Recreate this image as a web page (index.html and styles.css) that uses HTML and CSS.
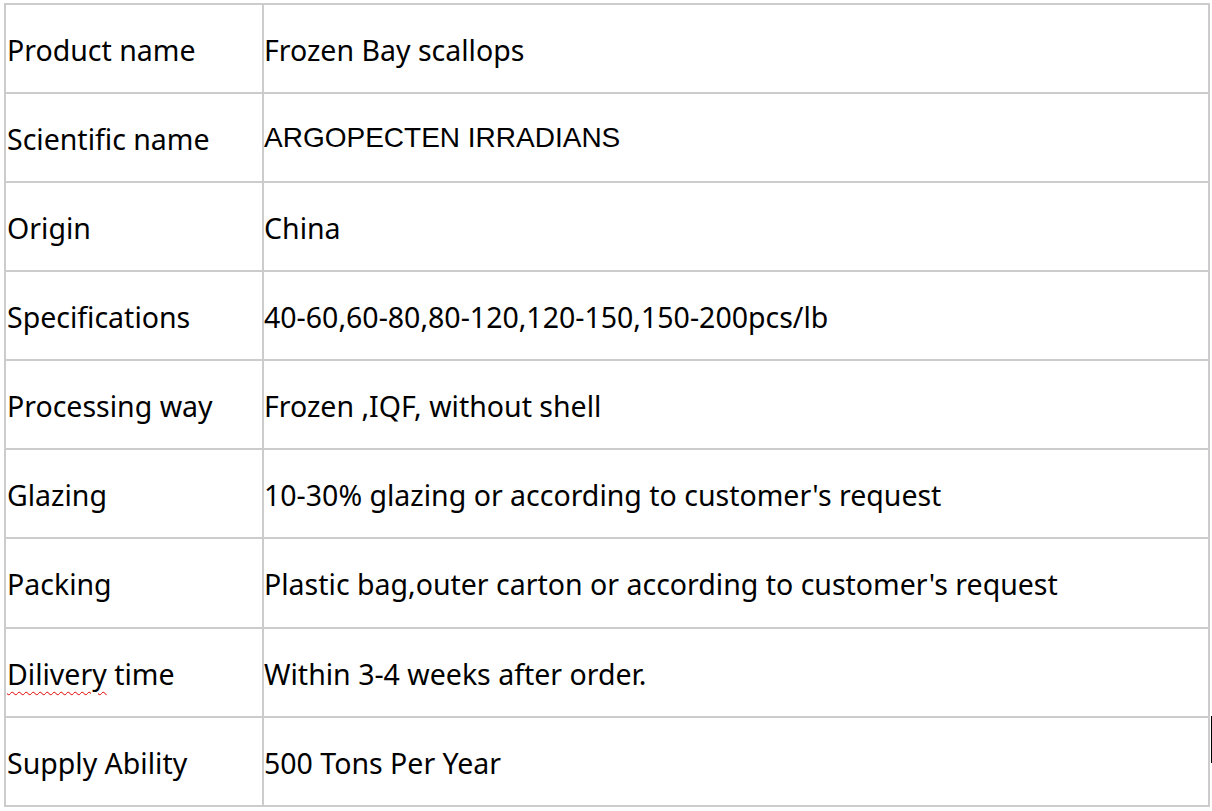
FILE: index.html
```html
<!DOCTYPE html>
<html>
<head>
<meta charset="utf-8">
<link rel="stylesheet" href="styles.css">
</head>
<body>
<div class="spec">
  <div class="cell key">Product name</div>
  <div class="cell val">Frozen Bay scallops</div>
  <div class="cell key">Scientific name</div>
  <div class="cell val latin">ARGOPECTEN IRRADIANS</div>
  <div class="cell key">Origin</div>
  <div class="cell val">China</div>
  <div class="cell key">Specifications</div>
  <div class="cell val">40-60,60-80,80-120,120-150,150-200pcs/lb</div>
  <div class="cell key">Processing way</div>
  <div class="cell val">Frozen ,IQF, without shell</div>
  <div class="cell key">Glazing</div>
  <div class="cell val">10-30% glazing or according to customer's request</div>
  <div class="cell key">Packing</div>
  <div class="cell val">Plastic bag,outer carton or according to customer's request</div>
  <div class="cell key"><span><span class="misspelled">Dilivery</span> time</span></div>
  <div class="cell val">Within 3-4 weeks after order.</div>
  <div class="cell key">Supply Ability</div>
  <div class="cell val">500 Tons Per Year</div>
</div>
<div class="caret"></div>
</body>
</html>
```
FILE: styles.css
```css
html, body {
  margin: 0;
  padding: 0;
  background: #ffffff;
}
body {
  position: relative;
  width: 1212px;
  height: 811px;
  overflow: hidden;
  font-family: "Noto Sans", "Open Sans", sans-serif;
  color: #000000;
}
.spec {
  margin: 3px 0 0 4px;
  width: 1206px;
  box-sizing: border-box;
  padding: 2px;
  background: #cccccc;
  display: grid;
  grid-template-columns: 256px 944px;
  grid-template-rows: 87px 87px 87px 87px 87px 87px 88px 87px 87px;
  gap: 2px;
}
.cell {
  background: #ffffff;
  display: flex;
  align-items: center;
  box-sizing: border-box;
  padding-top: 3px;
  font-size: 28.5px;
  line-height: 1;
  white-space: nowrap;
}
.key {
  padding-left: 1px;
}
.val {
  padding-left: 0;
}
.latin {
  font-family: "Liberation Sans", Arial, sans-serif;
  font-size: 28px;
  padding-top: 0;
}
.misspelled {
  text-decoration: underline wavy #e00000;
  text-decoration-thickness: 1px;
  text-underline-offset: 6px;
}
.caret {
  position: absolute;
  left: 1211px;
  top: 716px;
  width: 1px;
  height: 47px;
  background: #000000;
}
```
